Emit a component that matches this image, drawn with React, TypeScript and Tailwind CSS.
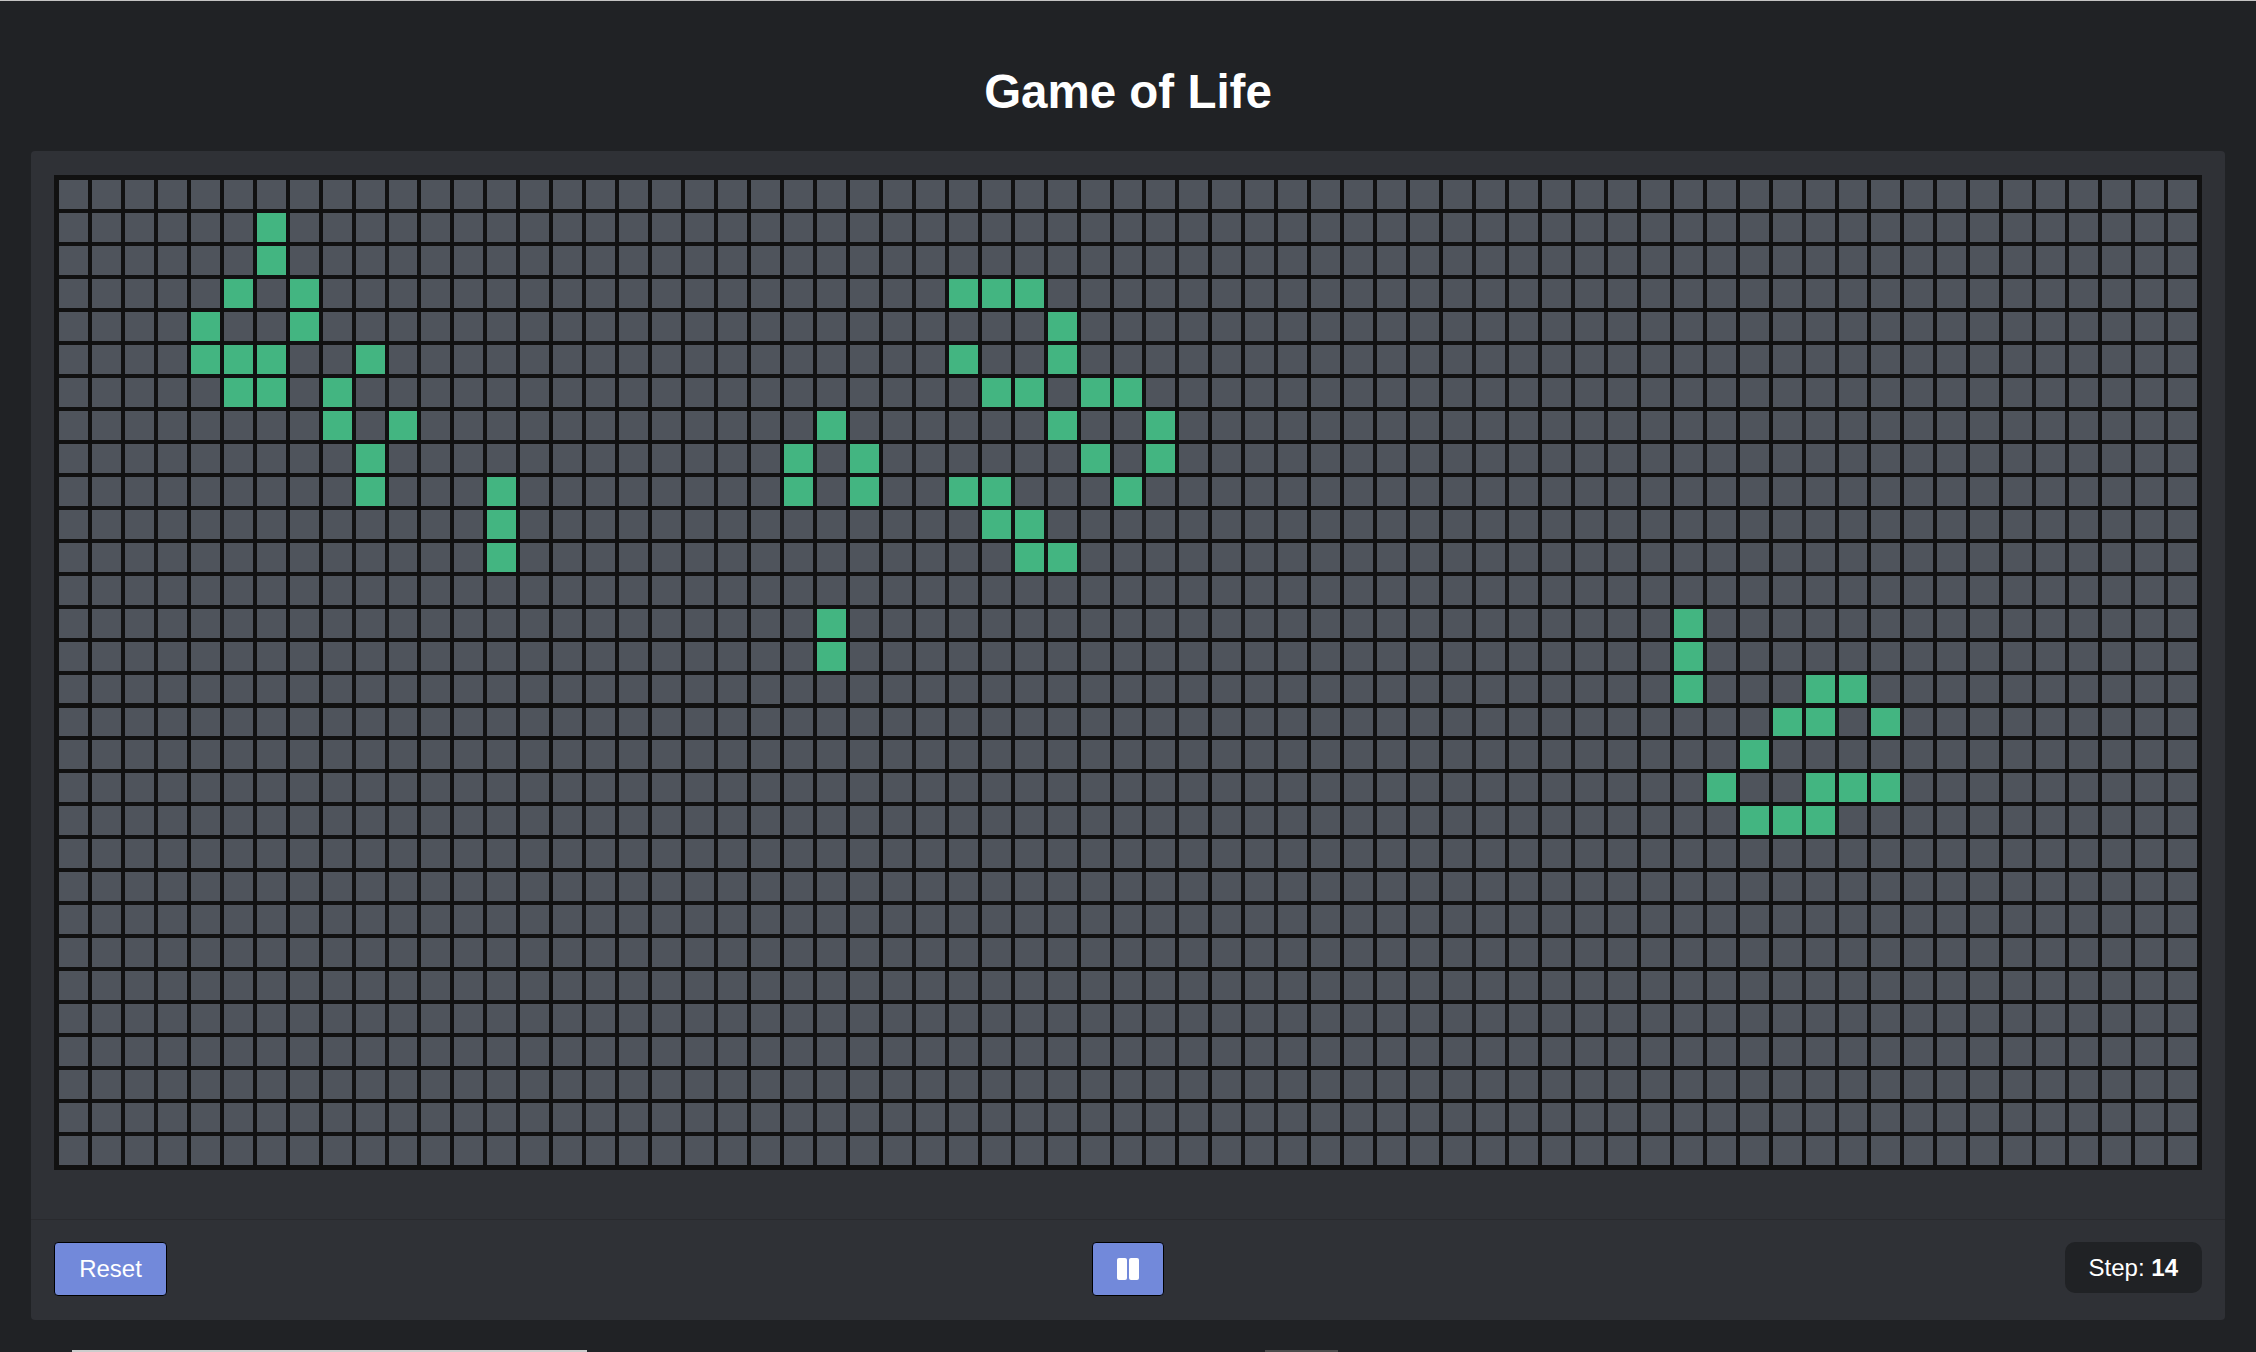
import React from "react";

const ROWS = 30;
const COLS = 65;

const LIVE: Record<number, number[]> = {
  1: [6],
  2: [6],
  3: [5, 7, 27, 28, 29],
  4: [4, 7, 30],
  5: [4, 5, 6, 9, 27, 30],
  6: [5, 6, 8, 28, 29, 31, 32],
  7: [8, 10, 23, 30, 33],
  8: [9, 22, 24, 31, 33],
  9: [9, 13, 22, 24, 27, 28, 32],
  10: [13, 28, 29],
  11: [13, 29, 30],
  13: [23, 49],
  14: [23, 49],
  15: [49, 53, 54],
  16: [52, 53, 55],
  17: [51],
  18: [50, 53, 54, 55],
  19: [51, 52, 53],
};

export default function App() {
  const cells: React.ReactNode[] = [];
  for (let r = 0; r < ROWS; r++) {
    const live = LIVE[r] || [];
    for (let c = 0; c < COLS; c++) {
      const on = live.includes(c);
      cells.push(
        <div
          key={`${r}-${c}`}
          className={on ? "aspect-square bg-[#43b581]" : "aspect-square bg-[#4f545c]"}
        />
      );
    }
  }

  return (
    <div
      className="min-h-screen bg-[#202225] border-t border-[#c4c4c4] text-white"
      style={{ fontFamily: '"Liberation Sans", Arial, sans-serif' }}
    >
      <h1 className="pt-[64px] mb-[32px] text-center text-[47.5px] leading-[54px] font-bold">
        Game of Life
      </h1>

      <div className="mx-[31px] rounded-[4px] bg-[#2f3136]">
        <div className="px-[23px] pt-[24px] pb-[49px]">
          <div className="bg-[#111111] p-[5px]">
            <div className="grid grid-cols-[repeat(65,minmax(0,1fr))] gap-[4px]">{cells}</div>
          </div>
        </div>
        <div className="border-t border-[#292a2e] px-[23px] pt-[22px] pb-[24px] grid grid-cols-3 items-start">
          <div className="flex justify-start">
            <button className="h-[54px] w-[113px] rounded-[4px] border border-black bg-[#7289da] text-[24px] text-white flex items-center justify-center">
              Reset
            </button>
          </div>
          <div className="flex justify-center">
            <button className="h-[54px] w-[72px] rounded-[4px] border border-black bg-[#7289da] flex items-center justify-center">
              <svg width="22" height="22" viewBox="0 0 22 22">
                <rect x="0" y="0" width="10" height="22" rx="2" fill="#ffffff" />
                <rect x="12" y="0" width="10" height="22" rx="2" fill="#ffffff" />
              </svg>
            </button>
          </div>
          <div className="flex justify-end">
            <div className="h-[51px] px-[24px] rounded-[10px] bg-[#202225] text-[24px] flex items-center">
              <span>Step:&nbsp;</span>
              <span className="font-bold">14</span>
            </div>
          </div>
        </div>
      </div>

      <div className="mt-[30px] flex">
        <div className="ml-[72px] w-[515px] h-[20px] bg-[#cccccc]" />
        <div className="ml-[678px] w-[73px] h-[20px] bg-[#4d4d4d]" />
      </div>
    </div>
  );
}
